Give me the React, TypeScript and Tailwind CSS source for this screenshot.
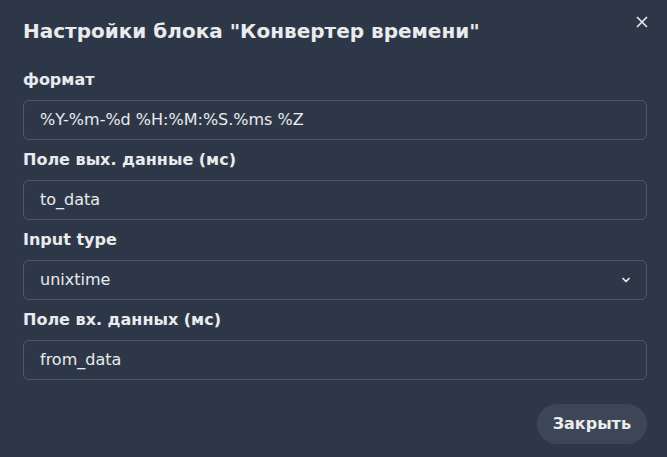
import React from "react";

function Field({ label, value, select }: { label: string; value: string; select?: boolean }) {
  return (
    <div className="flex flex-col">
      <div className="text-base leading-6 font-bold text-white/90 mb-2">{label}</div>
      <div className="relative h-10 rounded-md border border-white/[0.16] flex items-center pl-4 pr-8 text-base text-white/90">
        <span>{value}</span>
        {select && (
          <svg className="absolute right-[14px] top-1/2 -translate-y-1/2" width="12" height="12" viewBox="0 0 24 24" fill="none" stroke="currentColor" strokeWidth="3.5" strokeLinecap="round" strokeLinejoin="round">
            <path d="M6 9l6 6 6-6" />
          </svg>
        )}
      </div>
    </div>
  );
}

export default function App() {
  return (
    <div className="relative w-[667px] h-[457px] overflow-hidden bg-[#2d3748] text-white/90" style={{ fontFamily: '"DejaVu Sans", sans-serif' }}>
      <button className="absolute top-[6px] right-[9px] w-8 h-8 flex items-center justify-center text-white/90">
        <svg width="12" height="12" viewBox="0 0 12 12" fill="none" stroke="currentColor" strokeWidth="1.6">
          <path d="M1 1l10 10M11 1L1 11" />
        </svg>
      </button>
      <div className="pl-[23px] pr-5 pt-4 pb-4 text-xl leading-[30px] font-bold">Настройки блока "Конвертер времени"</div>
      <div className="pl-[23px] pr-5 pt-[6px] pb-[10px] flex flex-col gap-2">
        <Field label="формат" value="%Y-%m-%d %H:%M:%S.%ms %Z" />
        <Field label="Поле вых. данные (мс)" value="to_data" />
        <Field label="Input type" value="unixtime" select />
        <Field label="Поле вх. данных (мс)" value="from_data" />
      </div>
      <div className="pl-[23px] pr-5 pt-[14px] pb-4 flex justify-end">
        <button className="h-10 px-4 rounded-full bg-white/[0.08] text-base font-bold text-white/90">Закрыть</button>
      </div>
    </div>
  );
}
